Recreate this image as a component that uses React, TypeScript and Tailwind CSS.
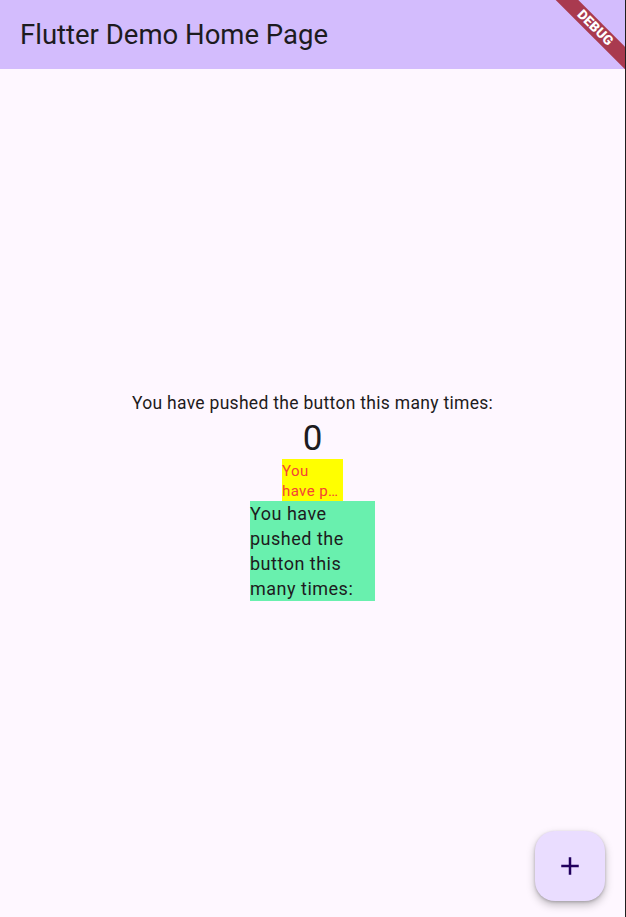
import React from "react";

export default function App() {
  return (
    <div className="flex h-[917px] w-[626px] overflow-hidden bg-[#fef7ff]" style={{ fontFamily: "Roboto, 'Noto Sans', sans-serif" }}>
      <div className="relative flex h-full w-[625px] flex-col overflow-hidden">
        <header className="flex h-[69px] shrink-0 items-center bg-[#d3bcfd] pl-[20px]">
          <h1 className="text-[27.5px] leading-[34px] text-[#1d1b20]">Flutter Demo Home Page</h1>
        </header>
        <main className="flex flex-1 flex-col items-center justify-center pt-[6px]">
          <p className="text-[17.5px] leading-[25px] tracking-[0.3px] text-[#1d1b20]">
            You have pushed the button this many times:
          </p>
          <p className="text-[35px] leading-[45px] text-[#1d1b20]">0</p>
          <div className="mt-[-2px] flex h-[42px] w-[61px] flex-col bg-[#ffff00] pt-[2px] text-[15px] leading-[20px] tracking-[0.4px] text-[#f44336]">
            <span className="whitespace-nowrap">You</span>
            <span className="overflow-hidden text-ellipsis whitespace-nowrap">have pushed the button this many times:</span>
          </div>
          <div className="h-[100px] w-[125px] bg-[#69f0ae] text-[18px] leading-[25px] tracking-[0.5px] text-[#1d1b20]">
            You have pushed the button this many times:
          </div>
        </main>
        <button className="absolute bottom-[16px] right-[20px] flex h-[70px] w-[70px] items-center justify-center rounded-[20px] bg-[#eaddff] shadow-[0_4px_8px_rgba(0,0,0,0.25),0_1px_3px_rgba(0,0,0,0.2)]">
          <svg width="30" height="30" viewBox="0 0 24 24" fill="#21005d">
            <path d="M19 13h-6v6h-2v-6H5v-2h6V5h2v6h6v2z" />
          </svg>
        </button>
        <div className="pointer-events-none absolute right-0 top-0 h-[80px] w-[80px] overflow-hidden">
          <div className="absolute left-[-10px] top-[20px] flex h-[16px] w-[120px] rotate-45 items-center justify-center bg-[#a93a4f]">
            <span className="text-[13.5px] font-black leading-none tracking-[0.2px] text-white">DEBUG</span>
          </div>
        </div>
      </div>
      <div className="h-full w-[1px] bg-[#1f1f1f]" />
    </div>
  );
}
